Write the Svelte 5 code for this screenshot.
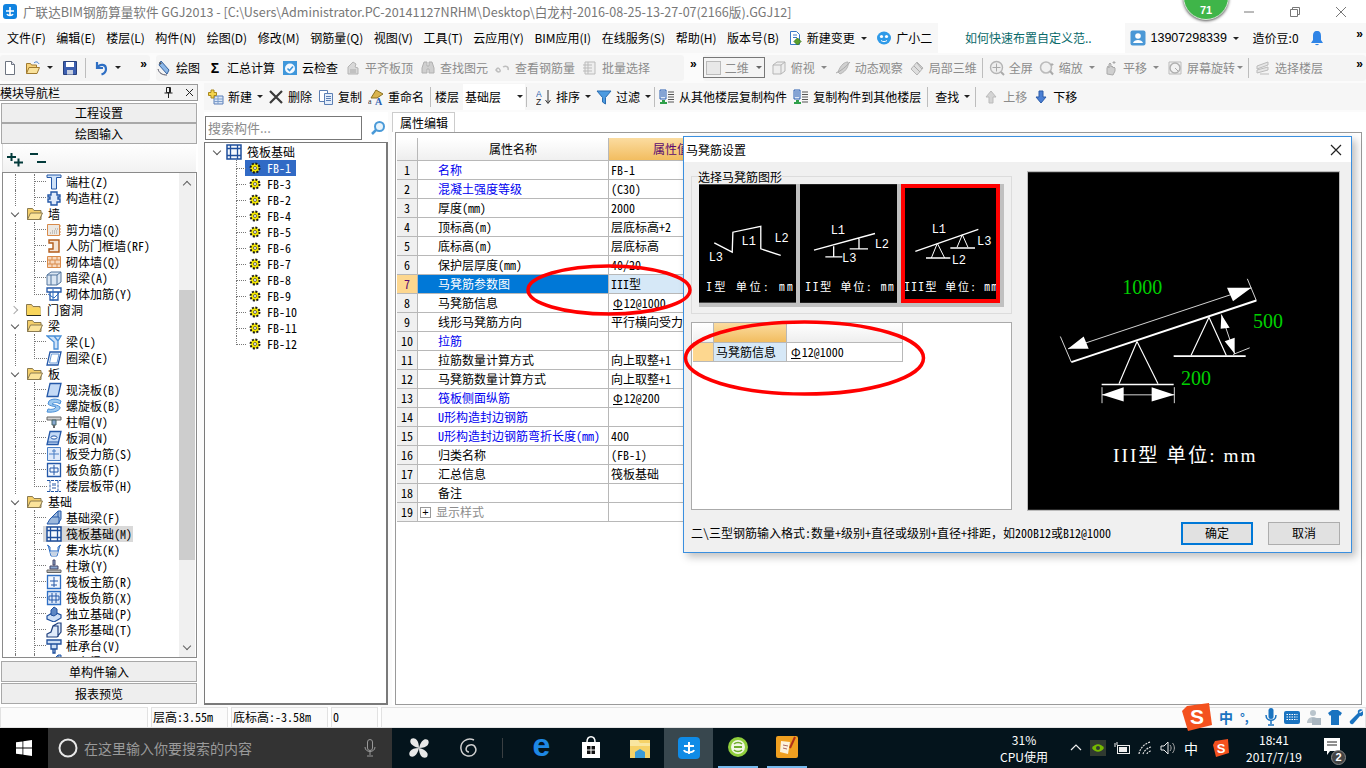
<script>
  // toolbar / tree icons, 16x16
  const icons = {
    file: '<path d="M3.5 1.5h6l3 3v10h-9z" fill="#fff" stroke="#6d7480"/><path d="M9.5 1.5v3h3" fill="#dde" stroke="#6d7480"/>',
    open: '<path d="M1.5 13.5v-10h4l1 1.5h5v2" fill="#f6d27a" stroke="#a07a30"/><path d="M1.5 13.5l2.5-6h10.5l-2.5 6z" fill="#f9e29c" stroke="#a07a30"/><path d="M9 3c2-2 4-1 5 1" fill="none" stroke="#3a78c8"/>',
    save: '<path d="M1.5 1.5h13v13h-13z" fill="#3c5fb0" stroke="#27407c"/><path d="M4 2h8v5H4z" fill="#fff"/><path d="M5 10h6v4.500H5z" fill="#c8d0e0"/>',
    undo: '<path d="M4 2v6h6M4.500 7.500C7 3.500 13 4 13 9c0 2.500-1.500 4.500-4.500 5.500" fill="none" stroke="#2f6fc4" stroke-width="2.200"/>',
    draw: '<path d="M5 1l8 9-2 4-8-9z" fill="#8db8e8" stroke="#335f9c"/><path d="M2 9c1 4 4 6 9 6" fill="none" stroke="#556" /><path d="M3 2l3 1-2 2z" fill="#555"/>',
    cloud: '<path d="M1 1h14v14H1z" fill="#3f97db"/><circle cx="8" cy="8.500" r="5" fill="#f4f9ff"/><path d="M5.500 8.500l2 2 3.500-4" fill="none" stroke="#3f97db" stroke-width="1.600"/>',
    g1: '<path d="M3 14V7l5-5 3 2-1 3 3 1v6z" fill="#d8d8d8" stroke="#b4b4b4"/><path d="M5 10h6M5 12h6" stroke="#aaa"/>',
    g2: '<path d="M2 8l2-6h3v4h2V2h3l2 6v5H9V9H7v4H2z" fill="#cfcfcf" stroke="#b0b0b0"/>',
    g3: '<path d="M1 10c2-3 3-2 4 0s-2 3-4 0zM8 7c3-2 6 0 5 3" fill="none" stroke="#bdbdbd" stroke-width="1.500"/>',
    g4: '<path d="M3 2h10v12H3z" fill="#eee" stroke="#bbb"/><path d="M1 5h9M1 8h9M1 11h9M6 2v12" stroke="#bbb"/>',
    cube: '<path d="M2 5l4-3h8v9l-4 3H2z" fill="#eee" stroke="#b5b5b5"/><path d="M2 5h8v9M10 5l4-3" fill="none" stroke="#b5b5b5"/>',
    orbit: '<path d="M3 12c3-8 7-10 10-10 1 3-1 9-8 12z" fill="#cfcfcf" stroke="#b4b4b4"/><path d="M1 13C6 11 12 6 15 2" stroke="#aaa" fill="none"/>',
    local: '<path d="M2 9l6-7 6 6-6 7z" fill="#dedede" stroke="#b4b4b4"/><path d="M5 6l6 6M8 3l5 6" stroke="#aaa"/>',
    full: '<circle cx="7.500" cy="7.500" r="6" fill="#eee" stroke="#b4b4b4" stroke-width="1.400"/><path d="M7.500 3.500v8M3.500 7.500h8" stroke="#aaa"/><path d="M12 12l3 3" stroke="#aaa" stroke-width="2"/>',
    zoom: '<circle cx="7" cy="7.500" r="5.500" fill="#f0f0f0" stroke="#bbb" stroke-width="1.600"/><path d="M11 11l3 3.500" stroke="#aaa" stroke-width="2"/><path d="M13 3v3M11.500 4.500h3" stroke="#aaa"/>',
    pan: '<path d="M4 14V8l1-2 1 2V4l1-1 1 1v3l1-1 1 1v1l1-1 1 1v3l-2 4z" fill="#cfcfcf" stroke="#aaa"/><path d="M11 1v3M9.500 2.500h3" stroke="#aaa"/>',
    rotate: '<path d="M2 2h12v12H2z" fill="#f2f2f2" stroke="#bbb"/><circle cx="8" cy="8" r="5" fill="none" stroke="#b0b0b0" stroke-width="1.500"/><path d="M8 8l3 3" stroke="#aaa"/>',
    floors: '<path d="M2 6l11-4v3L2 9zM2 10l11-3v3L2 13z" fill="#e6e6e6" stroke="#bbb"/><path d="M5 14h9" stroke="#bbb"/>',
    newc: '<path d="M6 3.500h10" stroke="none"/><path d="M6 7h9v8H6z" fill="#dbe6f6" stroke="#5a7fb8"/><path d="M6 10h9M6 12.500h9M10 7v8" stroke="#7f9fcc"/><path d="M3 1h3v2.500h2.500v3H6V9H3V6.500H.500v-3H3z" fill="#f4d44c" stroke="#a8871c"/>',
    del: '<path d="M2 2l12 12M14 2L2 14" stroke="#3a3a3a" stroke-width="2.200"/>',
    copy: '<path d="M1.500 1.500h8v11h-8z" fill="#fff" stroke="#5c7fb4"/><path d="M6.500 4.500h8v11h-8z" fill="#e4eefb" stroke="#5c7fb4"/><path d="M8 7.500h5M8 9.500h5M8 11.500h5" stroke="#5c7fb4"/>',
    rename: '<path d="M3 9l5-8 7 4-6 4z" fill="#d9b44e" stroke="#8a7020"/><text x="0" y="15" font-size="8" font-family="Liberation Serif" fill="#333">a</text><text x="7" y="15.500" font-size="10" font-weight="700" font-family="Liberation Serif" fill="#2a5fb0">A</text>',
    sort: '<text x="0" y="7.500" font-size="8.500" font-family="Liberation Sans" fill="#2a5fb0">A</text><text x="0" y="15.500" font-size="8.500" font-family="Liberation Sans" fill="#222">Z</text><path d="M12 1v13M9.500 11l2.500 3.500 2.500-3.500" fill="none" stroke="#333"/>',
    filter: '<path d="M1 2h14L9.500 8.500V15l-3-2V8.500z" fill="#4d9be0" stroke="#2a6cb0"/>',
    fromf: '<path d="M1 1h6v9H1z" fill="#dfe9f7" stroke="#2a5fb0"/><path d="M2 3h4M2 5h4M2 7h4" stroke="#2a5fb0"/><path d="M9 3h6M9 5.500h6M9 8h6M9 10.500h6M9 13h6" stroke="#555"/><path d="M3 11h3v2h2v2H1v-2h2z" fill="#2fa04a"/>',
    up: '<path d="M8 2l5 6h-3v6H6V8H3z" fill="#d4d4d4" stroke="#bbb"/>',
    down: '<path d="M8 14l5-6h-3V2H6v6H3z" fill="#4a7fd4" stroke="#2c5ca8"/>',
    changes: '<path d="M3.500 1.500h6l3 3v10h-9z" fill="#fff" stroke="#3a78c8"/><path d="M6 5h4M6 7.500h4" stroke="#3a78c8"/><path d="M10.500 8l3.500 3.500-3.500 3.500-3.500-3.500z" fill="#5aa02c" stroke="#3a7a1c"/>',
    mascot: '<ellipse cx="8" cy="8" rx="7" ry="6.500" fill="#2f9ae8"/><circle cx="5.500" cy="6.500" r="1.600" fill="#fff"/><circle cx="10.500" cy="6.500" r="1.600" fill="#fff"/><path d="M5 10.500c2 1.500 4 1.500 6 0" stroke="#fff" fill="none"/>',
    user: '<rect x="0.500" y="0.500" width="15" height="15" rx="2" fill="#4b98d6"/><circle cx="8" cy="6" r="2.800" fill="#fff"/><path d="M3 13c1-4 9-4 10 0z" fill="#fff"/>',
    bell: '<path d="M8 1c3 0 4 2 4 5v4l2 3H2l2-3V6c0-3 1-5 4-5z" fill="#2f84e6"/><path d="M6 14c.5 1.500 3.500 1.500 4 0z" fill="#2f84e6"/>',
    // tree
    duanzhu: '<path d="M1 1h14v2.500H10.500V15h-5V3.500H1z" fill="#cfe2f8" stroke="#2458a8"/>',
    gouzao: '<path d="M5 2h6v3h3v2h-2v2h2v3h-3v3H5v-3H2V9h2V7H2V5h3z" fill="#dfeafa" stroke="#2458a8" stroke-width="1.400"/>',
    jianli: '<path d="M1.500 2.500h12v11h-12z" fill="#ece8e2" stroke="#d88a4a"/><path d="M4 11h8M6 9h6M9 7h3" stroke="#999" stroke-dasharray="1 1"/><path d="M14 3v10" stroke="#d88a4a" stroke-dasharray="2 1"/>',
    renfang: '<path d="M3 2h10v12H3v-3h4V5H3z" fill="#f4e4d6" stroke="#b25c1c" stroke-width="1.400"/>',
    brick: '<path d="M1.500 2.500h13v11h-13z" fill="#f7d9bf" stroke="#d88a4a"/><path d="M1.500 6h13M1.500 10h13M6 2.500V6M11 2.500V6M4 6v4M9 6v4M6 10v3.500M11 10v3.500" stroke="#d88a4a"/>',
    anliang: '<path d="M1 5l4-3h10v10l-4 3H1z" fill="#dbe6f2" stroke="#52749c"/><path d="M1 5h10v10M11 5l4-3" fill="none" stroke="#52749c"/><path d="M5 5v10" stroke="#52749c"/>',
    qiti: '<path d="M1 2h14v4H1zM4 6v8h8V6" fill="none" stroke="#2458a8" stroke-width="1.300"/><path d="M7 3v12M2 8l6 4 5-5" fill="none" stroke="#2f6fc4"/>',
    liang: '<path d="M1 2h14l-3 5v8H8V8zM8 2l4 5" fill="#cfe2f8" stroke="#4a90d8" stroke-width="1.300"/>',
    quan: '<path d="M4 2h11l-3 13H1z" fill="#fff" stroke="#2458a8" stroke-width="1.300"/><path d="M5.500 4h7.500l-2 9H3.500z" fill="none" stroke="#6a9ad8"/>',
    xianjiao: '<path d="M4 1.500h11l-3 13H1z" fill="#c4daf6" stroke="#2458a8" stroke-width="1.300"/>',
    luoxuan: '<path d="M3 3c4-3 9-2 12 0l-1 3c-3-2-6-2-8 0 3 1 6 1 8 3 1 3-5 6-13 5l1-3c4 1 7 0 8-2-3-1-6-1-8-3z" fill="#9cc8f0" stroke="#4a90d8"/>',
    zhumao: '<path d="M1 3h14v3H1z" fill="#d0d0d0" stroke="#666"/><path d="M6 6h4v5H6z" fill="#8aa8d0" stroke="#466"/><path d="M7 11h2v3H7z" fill="#666"/>',
    bandong: '<path d="M4 1.500h11l-3 13H1z" fill="#c4daf6" stroke="#2458a8" stroke-width="1.300"/><ellipse cx="8" cy="7.500" rx="3" ry="1.600" fill="#fff" stroke="#2458a8"/><path d="M2 12h10" stroke="#2458a8"/>',
    shouli: '<path d="M1.500 1.500h13v13h-13z" fill="#dfeafa" stroke="#4a7fc4"/><path d="M8 3v10M3 8h10M6 5h4" stroke="#4a7fc4" fill="none"/>',
    fujin: '<path d="M1.500 1.500h13v13h-13z" fill="#f2f7fe" stroke="#2458a8" stroke-width="1.300"/><path d="M4 6h8v4H4zM8 3v10" stroke="#2458a8" fill="none"/>',
    bandai: '<path d="M1 2.500h14M1 13.500h14M4 2.500v11M12 2.500v11M7 5v6M9 5v6" stroke="#2458a8" fill="none" stroke-dasharray="3 1"/>',
    jichuliang: '<path d="M1 14l3-5 2-2 6-6h3v8l-3 5z" fill="#9cb8dc" stroke="#2458a8"/><path d="M6 7h7v7M12 1v6" fill="none" stroke="#2458a8"/>',
    fabran: '<path d="M1 1h14v14H1z" fill="#f4f8fe" stroke="#1f4f9c" stroke-width="1.500"/><path d="M4.500 4.500h7v7h-7zM1 4.500h3M12 4.500h3M1 11.500h3M12 11.500h3M4.500 1v3M11.500 1v3M4.500 12v3M11.500 12v3" fill="none" stroke="#1f4f9c" stroke-width="1.300"/>',
    jishui: '<path d="M1 3l3 2v4h8V5l3-2M2 3l3 11h6l3-11" fill="none" stroke="#2f6fc4"/><path d="M4 10h8l-2 4H6z" fill="#c8d4e4"/>',
    zhudun: '<path d="M7 2h2v5H7zM4 8h8v3H4z" fill="#8aa8d0" stroke="#446"/><path d="M1 12h14v2.500H1z" fill="#b8b8b8" stroke="#666"/>',
    zhujin: '<path d="M1.500 1.500h13v13h-13z" fill="#f2f7fe" stroke="#2f6fc4" stroke-width="1.300"/><path d="M8 3v10M4 7h8M5 11h6" stroke="#2458a8" fill="none"/>',
    fufu: '<path d="M1.500 1.500h13v13h-13z" fill="#dfeafa" stroke="#2f6fc4" stroke-width="1.300"/><path d="M3 6h10v4H3zM6 3v10M10 3v10" stroke="#2458a8" fill="none"/>',
    duli: '<path d="M1 10l7-4 7 3v3l-7 4-7-3z" fill="#cfe0f6" stroke="#1f4f9c" stroke-width="1.200"/><path d="M5 9V4l3-3 3 2v5l-3 2z" fill="#5d87c4" stroke="#1f4f9c"/>',
    tiaoxing: '<path d="M1 15v-3l4-2 2-6 5-3h3v9l-4 5zM7 4h5v11" fill="#dfeafa" stroke="#1f3f7c" stroke-width="1.200"/>',
    chengtai: '<path d="M1 2h14v4H1zM5 6h6v5H5zM7 11h2v4H7z" fill="#cfe0f6" stroke="#1f4f9c" stroke-width="1.300"/>'
  };

  const menus = ['文件(F)', '编辑(E)', '楼层(L)', '构件(N)', '绘图(D)', '修改(M)', '钢筋量(Q)', '视图(V)', '工具(T)', '云应用(Y)', 'BIM应用(I)', '在线服务(S)', '帮助(H)', '版本号(B)'];

  const tools1a = [
    { i: 'draw', t: '绘图' }, { g: 'Σ', t: '汇总计算' }, { i: 'cloud', t: '云检查' },
    { i: 'g1', t: '平齐板顶', off: 1 }, { i: 'g2', t: '查找图元', off: 1 }, { i: 'g3', t: '查看钢筋量', off: 1 }, { i: 'g4', t: '批量选择', off: 1 }
  ];
  const tools1b = [
    { i: 'cube', t: '俯视', off: 1, arrow: 1 }, { i: 'orbit', t: '动态观察', off: 1 }, { i: 'local', t: '局部三维', off: 1 }, { sep: 1 },
    { i: 'full', t: '全屏', off: 1 }, { i: 'zoom', t: '缩放', off: 1, arrow: 1 }, { i: 'pan', t: '平移', off: 1, arrow: 1 },
    { i: 'rotate', t: '屏幕旋转', off: 1, arrow: 1, tight: 1 }, { sep: 1 }, { i: 'floors', t: '选择楼层', off: 1 }
  ];
  const tools2a = [{ i: 'newc', t: '新建', arrow: 1 }, { i: 'del', t: '删除' }, { i: 'copy', t: '复制' }, { i: 'rename', t: '重命名' }];
  const tools2b = [
    { i: 'sort', t: '排序', arrow: 1 }, { i: 'filter', t: '过滤', arrow: 1 }, { sep: 1, slim: 1 },
    { i: 'fromf', t: '从其他楼层复制构件' }, { i: 'fromf', t: '复制构件到其他楼层' }, { sep: 1 },
    { t: '查找', arrow: 1 }, { sep: 1 }, { i: 'up', t: '上移', off: 1 }, { i: 'down', t: '下移' }
  ];

  // kind: f = open folder, c = closed folder, default leaf
  const nav = [
    { t: '端柱(Z)', i: 'duanzhu' }, { t: '构造柱(Z)', i: 'gouzao' },
    { t: '墙', f: 'open' },
    { t: '剪力墙(Q)', i: 'jianli' }, { t: '人防门框墙(RF)', i: 'renfang' }, { t: '砌体墙(Q)', i: 'brick' }, { t: '暗梁(A)', i: 'anliang' }, { t: '砌体加筋(Y)', i: 'qiti', last: 1 },
    { t: '门窗洞', f: 'closed' },
    { t: '梁', f: 'open' },
    { t: '梁(L)', i: 'liang' }, { t: '圈梁(E)', i: 'quan', last: 1 },
    { t: '板', f: 'open' },
    { t: '现浇板(B)', i: 'xianjiao' }, { t: '螺旋板(B)', i: 'luoxuan' }, { t: '柱帽(V)', i: 'zhumao' }, { t: '板洞(N)', i: 'bandong' }, { t: '板受力筋(S)', i: 'shouli' }, { t: '板负筋(F)', i: 'fujin' }, { t: '楼层板带(H)', i: 'bandai', last: 1 },
    { t: '基础', f: 'open' },
    { t: '基础梁(F)', i: 'jichuliang' }, { t: '筏板基础(M)', i: 'fabran', sel: 1 }, { t: '集水坑(K)', i: 'jishui' }, { t: '柱墩(Y)', i: 'zhudun' }, { t: '筏板主筋(R)', i: 'zhujin' }, { t: '筏板负筋(X)', i: 'fufu' }, { t: '独立基础(P)', i: 'duli' }, { t: '条形基础(T)', i: 'tiaoxing' }, { t: '桩承台(V)', i: 'chengtai' }, { t: '承台梁(F)', i: 'jichuliang' }
  ];

  const parts = ['FB-1', 'FB-3', 'FB-2', 'FB-4', 'FB-5', 'FB-6', 'FB-7', 'FB-8', 'FB-9', 'FB-10', 'FB-11', 'FB-12'];

  const props = [
    { n: '名称', v: 'FB-1', blue: 1 }, { n: '混凝土强度等级', v: '(C30)', blue: 1 }, { n: '厚度(mm)', v: '2000' },
    { n: '顶标高(m)', v: '层底标高+2' }, { n: '底标高(m)', v: '层底标高' }, { n: '保护层厚度(mm)', v: '40/20' },
    { n: '马凳筋参数图', v: 'III型', sel: 1 }, { n: '马凳筋信息', v: '12@1000', rebar: 1 }, { n: '线形马凳筋方向', v: '平行横向受力筋' },
    { n: '拉筋', v: '', blue: 1 }, { n: '拉筋数量计算方式', v: '向上取整+1' }, { n: '马凳筋数量计算方式', v: '向上取整+1' },
    { n: '筏板侧面纵筋', v: '12@200', blue: 1, rebar: 1 }, { n: 'U形构造封边钢筋', v: '', blue: 1 }, { n: 'U形构造封边钢筋弯折长度(mm)', v: '400', blue: 1 },
    { n: '归类名称', v: '(FB-1)' }, { n: '汇总信息', v: '筏板基础' }, { n: '备注', v: '' }, { n: '显示样式', v: '', plus: 1 }
  ];
</script>

{#snippet ic(name, size = 16)}
  <svg class="ic" width={size} height={size} viewBox="0 0 16 16">{@html icons[name]}</svg>
{/snippet}

{#snippet tools(list)}
  {#each list as it}
    {#if it.sep}
      <span class="sep" class:slim={it.slim}></span>
    {:else}
      <span class="tool" class:off={it.off} class:tight={it.tight}>
        {#if it.i}{@render ic(it.i)}{/if}
        {#if it.g}<b class="sigma">{it.g}</b>{/if}
        <span>{it.t}</span>
        {#if it.arrow}<i class="arrow"></i>{/if}
      </span>
    {/if}
  {/each}
{/snippet}

{#snippet folder(open)}
  <svg class="ic" width="16" height="14" viewBox="0 0 16 14">
    <path d="M.5 12.500V1.500h5l1.500 2h7v9z" fill="#f5cf6a" stroke="#8a7a50"/>
    {#if open}<path d="M.5 12.500l3-6.500h12l-3 6.500z" fill="#fbe39a" stroke="#8a7a50"/>{:else}<path d="M1 5h13.500v7.500H1z" fill="#f9d65c"/><path d="M1 12.500h14" stroke="#2a2a1a"/>{/if}
  </svg>
{/snippet}

<div class="screen">
  <header class="titlebar">
    <svg class="logo" width="14" height="15" viewBox="0 0 14 15"><rect width="14" height="15" rx="3" fill="#1183e0"/><path d="M7 3v9M3 7h8M4 10c1 2 5 2 6 0" stroke="#fff" stroke-width="1.600" fill="none"/></svg>
    <span class="title-text">广联达BIM钢筋算量软件 GGJ2013 - [C:\Users\Administrator.PC-20141127NRHM\Desktop\白龙村-2016-08-25-13-27-07(2166版).GGJ12]</span>
    <span class="winbtns">
      <svg width="12" height="12" viewBox="0 0 12 12"><path d="M1 6h10" stroke="#777"/></svg>
      <svg width="12" height="12" viewBox="0 0 12 12"><path d="M1.500 3.500h7v7h-7zM3.500 3V1.500h7v7H9" fill="none" stroke="#777"/></svg>
      <svg width="12" height="12" viewBox="0 0 12 12"><path d="M1 1l10 10M11 1L1 11" stroke="#777"/></svg>
    </span>
  </header>

  <nav class="menubar">
    {#each menus as m}<span class="menu">{m}</span>{/each}
    <span class="tool menu-tool">{@render ic('changes')}<span>新建变更</span><i class="arrow"></i></span>
    <span class="tool menu-tool">{@render ic('mascot')}<span>广小二</span></span>
    <span class="tip">如何快速布置自定义范..</span>
    <span class="tool">{@render ic('user')}<span class="phone">13907298339</span><i class="arrow"></i></span>
    <span class="beans">造价豆:0</span>
    {@render ic('bell', 16)}
    <span class="more end">»</span>
  </nav>

  <div class="toolbar one">
    <div class="strip left">
      {@render ic('file')}
      <span class="tool">{@render ic('open')}<i class="arrow"></i></span>
      {@render ic('save')}
      <span class="sep"></span>
      <span class="tool">{@render ic('undo')}<i class="arrow"></i></span>
      <span class="more">»</span>
    </div>
    <div class="strip mid">{@render tools(tools1a)}</div>
    <span class="more">»</span>
    <div class="strip right">
      <span class="combo2d"><i class="sq"></i><span>二维</span><i class="arrow"></i></span>
      {@render tools(tools1b)}
      <span class="more end">»</span>
    </div>
  </div>

  <div class="work">
    <aside class="nav">
      <div class="nav-head">
        <span>模块导航栏</span>
        <svg class="pin" width="9" height="11" viewBox="0 0 9 11"><path d="M2.500 .5h4v5h-4zM.5 6h8M4.500 6v5M5.500 1v4.500" fill="none" stroke="#222"/></svg>
        <svg class="cross" width="9" height="9" viewBox="0 0 9 9"><path d="M1 1l7 7M8 1L1 8" stroke="#222"/></svg>
      </div>
      <button class="navbtn first">工程设置</button>
      <button class="navbtn second">绘图输入</button>
      <div class="plusminus">
        <svg width="42" height="20" viewBox="0 0 42 20"><path d="M0 8h9M4.500 4v8M7 13.500h9M11.500 9.500v8" stroke="#023a3a" stroke-width="2" fill="none"/><path d="M23 5h8M30 13h9" stroke="#023a3a" stroke-width="2"/></svg>
      </div>
      <div class="navtree">
        <div class="navlist">
          {#each nav as row}
            {#if row.f}
              <div class="nrow fold">
                <span class="chev" class:closed={row.f === 'closed'}></span>
                {@render folder(row.f === 'open')}
                <span class="ntext cad">{row.t}</span>
              </div>
            {:else}
              <div class="nrow leaf" class:last={row.last}>
                <span class="nicon" class:picked={row.sel}>{@render ic(row.i)}<span class="ntext cad">{row.t}</span></span>
              </div>
            {/if}
          {/each}
        </div>
        <div class="scroll">
          <span class="sarrow up"></span>
          <span class="thumb"></span>
          <span class="sarrow down"></span>
        </div>
      </div>
      <button class="navbtn low">单构件输入</button>
      <button class="navbtn">报表预览</button>
    </aside>

    <div class="content">
      <div class="toolbar two">
        {@render tools(tools2a)}
        <span class="sep"></span>
        <span class="plain">楼层</span>
        <span class="floorbox"><span>基础层</span><i class="arrow"></i></span>
        <span class="sep after-floor"></span>
        {@render tools(tools2b)}
      </div>

      <div class="panes">
        <section class="parts">
          <div class="searchrow">
            <span class="search">搜索构件...</span>
            <svg width="16" height="16" viewBox="0 0 16 16"><circle cx="9.500" cy="6.500" r="4.500" fill="#e8f4fc" stroke="#4a9ad8" stroke-width="2"/><path d="M6 10l-4 4" stroke="#4a9ad8" stroke-width="2.500"/></svg>
          </div>
          <div class="parttree">
            <div class="proot"><span class="chev"></span><span class="bigic">{@render ic('fabran')}</span><span class="ntext">筏板基础</span></div>
            {#each parts as p, i}
              <div class="pchild" class:last={i === parts.length - 1}>
                <span class="pcell" class:current={i === 0}>
                  <svg class="gear" width="12" height="12" viewBox="0 0 12 12"><circle cx="6" cy="6" r="4.500" fill="#f4e800" stroke="#1a1a1a" stroke-width="2" stroke-dasharray="2 1.500"/><circle cx="6" cy="6" r="1.500" fill="#fff" stroke="#333" stroke-width=".7"/></svg>
                  <span class="cad">{p}</span>
                </span>
              </div>
            {/each}
          </div>
        </section>

        <section class="editor">
          <div class="tabs"><span class="tab">属性编辑</span></div>
          <div class="sheet">
            <div class="grow head"><span class="gno"></span><span class="gname">属性名称</span><span class="gval">属性值</span></div>
            {#each props as p, i}
              <div class="grow" class:sel={p.sel}>
                <span class="gno cad">{i + 1}</span>
                <span class="gname cad" class:blue={p.blue} class:mute={p.plus}>
                  {#if p.plus}<span class="plusbox">+</span>{/if}{p.n}
                </span>
                <span class="gval cad">{#if p.rebar}<span class="rebar">Φ</span>{/if}{p.v}</span>
              </div>
            {/each}
          </div>
        </section>
      </div>
    </div>
  </div>

  <footer class="status">
    <span class="cell a"></span>
    <span class="cell b cad">层高:3.55m</span>
    <span class="cell c cad">底标高:-3.58m</span>
    <span class="cell d cad">0</span>
    <span class="cell e"></span>
    <div class="ime">
      <svg width="30" height="28" viewBox="0 0 30 28"><path d="M5 3l22-3 3 22-24 6-6-20z" fill="#f4511e"/><text x="15" y="21" font-size="21" font-weight="700" text-anchor="middle" font-family="Liberation Sans" fill="#fff">S</text></svg>
      <span class="zh">中</span>
      <span class="punct">°,</span>
      <svg width="12" height="18" viewBox="0 0 12 18"><rect x="3.500" y="0" width="5" height="11" rx="2.500" fill="#1a73c0"/><path d="M1 7c0 7 10 7 10 0M6 12v4M3 17h6" fill="none" stroke="#1a73c0" stroke-width="1.500"/></svg>
      <svg width="16" height="13" viewBox="0 0 16 13"><rect width="16" height="13" rx="2" fill="#1a73c0"/><path d="M2.500 3.500h11M2.500 6h11M2.500 8.500h11" stroke="#fff" stroke-dasharray="1.500 1"/></svg>
      <svg width="14" height="16" viewBox="0 0 14 16"><circle cx="6" cy="4" r="3" fill="#b9c4cc"/><path d="M0 14c0-8 12-8 12 0z" fill="#b9c4cc"/><rect x="5" y="9" width="9" height="7" fill="#a9b6c0"/></svg>
      <svg width="14" height="15" viewBox="0 0 14 15"><path d="M4 0h6l4 3-2 3-1-1v10H3V5L2 6 0 3z" fill="#1a73c0"/></svg>
      <svg width="14" height="16" viewBox="0 0 14 16"><path d="M14 1c-3-2-6 0-5 3L1 12c-1 2 1 4 3 3l7-8c3 1 4-3 3-5l-3 2-1-1z" fill="#1a73c0"/></svg>
    </div>
  </footer>

  <div class="taskbar">
    <span class="start"><svg width="16" height="16" viewBox="0 0 16 16"><path d="M0 2.300l6.500-.9v6.200H0zM7.300 1.300L16 0v7.600H7.300zM0 8.400h6.500v6.200L0 13.700zM7.300 8.400H16V16l-8.700-1.200z" fill="#fff"/></svg></span>
    <span class="tsearch">
      <svg width="22" height="22" viewBox="0 0 22 22"><circle cx="11" cy="11" r="8.500" fill="none" stroke="#e8e8e8" stroke-width="2"/></svg>
      <span class="hint">在这里输入你要搜索的内容</span>
      <svg class="tmic" width="12" height="18" viewBox="0 0 12 18"><rect x="3.500" y=".5" width="5" height="11" rx="2.500" fill="none" stroke="#999"/><path d="M1 8c0 6 10 6 10 0M6 13v3M3 17h6" fill="none" stroke="#999"/></svg>
    </span>
    <span class="task pad"><svg width="24" height="24" viewBox="0 0 24 24"><path d="M12 12C4 10 2 6 4 3c3-2 8 0 8 9zM12 12c2-8 6-10 9-8 2 3 0 8-9 8zM12 12c8 2 10 6 8 9-3 2-8 0-8-9zM12 12c-2 8-6 10-9 8-2-3 0-8 9-8z" fill="#e8e8e8"/></svg></span>
    <span class="task"><svg width="22" height="22" viewBox="0 0 22 22"><path d="M17 3C10 0 3 5 4 12s9 9 13 5 1-10-4-9-5 7-1 7" fill="none" stroke="#d0d0d0" stroke-width="1.500"/></svg></span>
    <span class="tsep"></span>
    <span class="task"><span class="edge">e</span></span>
    <span class="task"><svg width="20" height="24" viewBox="0 0 20 24"><path d="M1 6h18v16H1z" fill="#fff"/><path d="M6 6c0-7 8-7 8 0" fill="none" stroke="#fff" stroke-width="1.500"/><path d="M6 10h3.500v3.500H6zM10.500 10H14v3.500h-3.500zM6 14.500h3.500V18H6zM10.500 14.500H14V18h-3.500z" fill="#111"/></svg></span>
    <span class="task"><svg width="22" height="22" viewBox="0 0 22 22"><path d="M1 3h20v18H1z" fill="#f6d268"/><path d="M1 3h8l2 3h10v3H1z" fill="#f9e6a0"/><path d="M6 21v-6l5-3 5 3v6z" fill="#3a9ad8"/></svg></span>
    <span class="task active"><svg width="24" height="24" viewBox="0 0 24 24"><rect x="1" y="1" width="22" height="22" rx="4" fill="#0f8be6"/><path d="M12 6v12M7 10h10M7 14c1 3 9 3 10 0" fill="none" stroke="#fff" stroke-width="2"/></svg></span>
    <span class="task lit"><svg width="24" height="24" viewBox="0 0 24 24"><circle cx="12" cy="12" r="10" fill="#8fce3c"/><circle cx="12" cy="12" r="7" fill="#f2f8e4"/><path d="M8 12h8" stroke="#6fae2c" stroke-width="2"/><path d="M8 9c2-2 6-2 8 0M8 15c2 2 6 2 8 0" fill="none" stroke="#6fae2c" stroke-width="1.500"/></svg></span>
    <span class="task lit"><svg width="24" height="24" viewBox="0 0 24 24"><rect x="1" y="1" width="22" height="22" rx="2" fill="#f0a020"/><path d="M6 6l9 1-2 12-8-2z" fill="#fdf3dc"/><path d="M8 10l5 1M8 13l4 1" stroke="#a66"/><path d="M20 2l-5 11" stroke="#b03018" stroke-width="2"/></svg></span>

    <div class="tray">
      <span class="cpu"><span>31%</span><span>CPU使用</span></span>
      <svg width="12" height="12" viewBox="0 0 12 12"><path d="M1 8l5-5 5 5" fill="none" stroke="#eee" stroke-width="1.200"/></svg>
      <svg width="16" height="16" viewBox="0 0 16 16"><rect width="16" height="16" fill="#303a30"/><path d="M2 8c3-5 9-5 12 0-3 5-9 5-12 0z" fill="#76b900"/><circle cx="8" cy="8" r="2" fill="#303a30"/></svg>
      <svg width="16" height="14" viewBox="0 0 16 14"><rect x="3.500" y="4.500" width="12" height="8" fill="none" stroke="#eee"/><rect x="5" y="6" width="8" height="5" fill="#eee"/><path d="M1 2v4M3 1v3" stroke="#eee"/></svg>
      <svg width="14" height="14" viewBox="0 0 14 14"><path d="M1 13C2 7 7 2 13 1M5 13c1-3 4-6 8-7M9 13c0-1 2-3 4-3" fill="none" stroke="#ddd" stroke-width="1.200" stroke-dasharray="2 1"/></svg>
      <svg width="16" height="14" viewBox="0 0 16 14"><path d="M1 5h3l4-4v12L4 9H1z" fill="none" stroke="#eee"/><path d="M10 4c1.500 2 1.500 4 0 6M12.500 2c2.500 3 2.500 7 0 10" fill="none" stroke="#aaa"/></svg>
      <span class="trayzh">中</span>
      <svg width="16" height="18" viewBox="0 0 16 18"><path d="M2 2l13-2 1 14-13 4-3-12z" fill="#f4511e"/><text x="8" y="14" font-size="13" font-weight="700" text-anchor="middle" font-family="Liberation Sans" fill="#fff">S</text></svg>
      <span class="clock"><span>18:41</span><span>2017/7/19</span></span>
      <span class="notify">
        <svg width="16" height="17" viewBox="0 0 16 17"><path d="M0 0h16v13H6l-3 4v-4H0z" fill="#fff"/><path d="M3 4h10M3 7h10" stroke="#222"/></svg>
        <b>2</b>
      </span>
    </div>
  </div>

  <!-- floating score badge -->
  <div class="badge"><span>71</span></div>

  <!-- dialog window -->
  <div class="dialog">
    <div class="dlg-title"><span>马凳筋设置</span>
      <svg width="12" height="12" viewBox="0 0 12 12"><path d="M1 1l10 10M11 1L1 11" stroke="#222" stroke-width="1.200"/></svg>
    </div>
    <div class="dlg-body">
      <div class="dlg-left">
        <fieldset class="group">
          <legend>选择马凳筋图形</legend>
          <div class="thumbs">
            <svg class="thumb1" width="97" height="119" viewBox="48 162 292 356">
              <rect x="48" y="162" width="292" height="356" fill="#000"/>
              <path d="M94 338l54 28 2-60 84-18v68l60 20" fill="none" stroke="#fff" stroke-width="4"/>
              <g class="lb"><text x="176" y="345">L1</text><text x="275" y="335">L2</text><text x="77" y="392">L3</text></g>
              <text class="cap" x="70" y="482" textLength="260" lengthAdjust="spacing">I型 单位: mm</text>
            </svg>
            <svg class="thumb1" width="97" height="119" viewBox="351 162 291 356">
              <rect x="351" y="162" width="291" height="356" fill="#000"/>
              <path d="M393 360l183-50M452 348v32M427 380h51M528 326v30M500 356h55" fill="none" stroke="#fff" stroke-width="4"/>
              <g class="lb"><text x="443" y="312">L1</text><text x="575" y="355">L2</text><text x="477" y="395">L3</text></g>
              <text class="cap" x="367" y="482" textLength="265" lengthAdjust="spacing">II型 单位: mm</text>
            </svg>
            <svg class="thumb1" width="99" height="119" viewBox="654 162 297 357">
              <rect x="654" y="162" width="297" height="357" fill="#000"/>
              <path d="M697 364l189-66M729 384h73M802 354h74" fill="none" stroke="#fff" stroke-width="4"/>
              <path d="M763 340l-18 44M763 340l22 44M838 314l-16 38M838 314l17 38" fill="none" stroke="#fff" stroke-width="3"/>
              <g class="lb"><text x="746" y="308">L1</text><text x="806" y="402">L2</text><text x="882" y="345">L3</text></g>
              <text class="cap" x="664" y="482" textLength="278" lengthAdjust="spacing">III型 单位: mm</text>
              <rect x="660" y="168" width="285" height="345" fill="none" stroke="#f00" stroke-width="12"/>
            </svg>
          </div>
        </fieldset>
        <div class="rebar-box">
          <div class="mini head"><span class="m0"></span><span class="m1"></span><span class="m2"></span></div>
          <div class="mini"><span class="m0"></span><span class="m1">马凳筋信息</span><span class="m2 cad"><span class="rebar">Φ</span>12@1000</span></div>
        </div>
      </div>
      <div class="preview">
        <svg width="311" height="338" viewBox="25 20 933 1013">
          <rect x="25" y="20" width="933" height="1013" fill="#000"/>
          <path d="M155 590L710 405" stroke="#fff" stroke-width="6" fill="none"/>
          <path d="M122 513l33 77M683 340l27 65M145 550L695 367M247 665v48M464 665v48M247 688h217M605 447l40 118M640 567l50-20" stroke="#fff" stroke-width="2.500" fill="none"/>
          <path d="M246 657h216M462 572h216" stroke="#fff" stroke-width="5" fill="none"/>
          <path d="M352 528l-54 127M352 528l63 127M568 455l-54 115M568 455l52 115" stroke="#fff" stroke-width="3.500" fill="none"/>
          <path d="M145 550l47-37 15 37zM695 367h-73l18 40zM605 447l25 40-27 3zM645 565l-30-38 30-10zM247 688l65-23v43zM464 688l-68-23v43z" fill="#fff"/>
          <g class="dim"><text x="308" y="386">1000</text><text x="700" y="488">500</text><text x="484" y="658">200</text></g>
          <text class="pcap" x="280" y="888" textLength="428" lengthAdjust="spacing">III型  单位: mm</text>
        </svg>
      </div>
    </div>
    <div class="dlg-foot">
      <span class="fmt cad">二\三型钢筋输入格式:数量+级别+直径或级别+直径+排距，如200B12或B12@1000</span>
      <button class="btn primary">确定</button>
      <button class="btn">取消</button>
    </div>
  </div>

  <!-- hand-drawn red marks over the screenshot -->
  <svg class="marks" width="1366" height="768" viewBox="0 0 1366 768">
    <ellipse cx="609" cy="290" rx="81" ry="24" fill="none" stroke="#f00" stroke-width="3.500"/>
    <ellipse cx="804.500" cy="358" rx="119" ry="36" fill="none" stroke="#f00" stroke-width="3.500"/>
  </svg>
</div>

<style>
  :global(body) {
    margin: 0;
    background: #f0f0f0;
  }

  .screen {
    position: relative;
    width: 1366px;
    height: 768px;
    overflow: hidden;
    display: flex;
    flex-direction: column;
    background: #fbfbfb;
    color: #000;
    font: 12px/16px "Noto Sans CJK SC", "Liberation Sans", sans-serif;
  }

  .cad {
    font-family: "Noto Sans Mono CJK SC", "Noto Sans CJK SC", monospace;
  }

  .ic {
    flex: none;
    display: block;
  }

  /* title + menu */
  .titlebar {
    height: 23px;
    flex: none;
    background: #fff;
    display: flex;
    align-items: center;
    padding-left: 3px;
    color: #777;
  }

  .title-text {
    margin-left: 6px;
    white-space: nowrap;
    font-size: 12.6px;
  }

  .winbtns {
    margin-left: auto;
    display: flex;
    gap: 34px;
    padding-right: 19px;
  }

  .menubar {
    height: 30px;
    flex: none;
    display: flex;
    align-items: center;
    padding-left: 7px;
    gap: 10.6px;
    background: #f7f7f7;
    white-space: nowrap;
  }

  .menu-tool {
    margin-left: -3px;
  }

  .tip {
    width: 187px;
    height: 30px;
    box-sizing: border-box;
    margin: 0 -5px;
    padding: 7px 0 0 27px;
    background: #fff;
    color: #0a6a6a;
  }

  .phone {
    font-family: "Liberation Sans", sans-serif;
    font-size: 12.5px;
  }

  .beans {
    margin-left: 1px;
  }

  .more {
    font: 700 12px/12px "Liberation Sans", sans-serif;
    margin-top: -8px;
  }

  .more.end {
    margin-left: auto;
    margin-right: 3px;
  }

  /* toolbars */
  .toolbar {
    display: flex;
    align-items: center;
    white-space: nowrap;
  }

  .toolbar.one {
    height: 29px;
    flex: none;
    gap: 6px;
    background: #fbfbfb;
  }

  .strip {
    height: 26px;
    display: flex;
    align-items: center;
    gap: 6px;
    background: #f4f4f4;
    border-radius: 3px;
  }

  .strip.left {
    padding: 0 3px 0 2px;
    width: 150px;
    box-sizing: border-box;
    gap: 7px;
  }

  .strip.left .more {
    margin-left: auto;
  }

  .strip.mid {
    gap: 7px;
    padding-right: 34px;
  }

  .strip.right {
    flex: 1;
  }

  .strip.right .sep {
    margin: 0 -0.5px;
  }

  .tool {
    display: inline-flex;
    align-items: center;
    gap: 4px;
  }

  .tool.off {
    color: #8c8c8c;
  }

  .tool.tight .arrow {
    margin: 0 0 0 -2px;
  }

  .sigma {
    width: 16px;
    text-align: center;
    font: 700 14px/16px "Liberation Sans", sans-serif;
  }

  .arrow {
    display: inline-block;
    width: 0;
    height: 0;
    border: 3px solid transparent;
    border-top: 3px solid #222;
    border-bottom: 0;
    margin: 0 2px;
  }

  .off .arrow {
    border-top-color: #888;
  }

  .sep {
    width: 1px;
    height: 20px;
    background: #bdbdbd;
    flex: none;
  }

  .combo2d {
    width: 62px;
    height: 21px;
    box-sizing: border-box;
    border: 1px solid #777;
    display: flex;
    align-items: center;
    gap: 4px;
    padding-left: 2px;
    color: #8c8c8c;
  }

  .sq {
    width: 13px;
    height: 12px;
    background: #e8e8e8;
    border: 1px solid #bbb;
  }

  .combo2d .arrow {
    margin-left: 3px;
    border-top-color: #666;
  }

  /* workspace */
  .work {
    flex: 1;
    min-height: 0;
    display: flex;
  }

  .nav {
    width: 198px;
    flex: none;
    margin-top: 2px;
    display: flex;
    flex-direction: column;
    background: #fff;
  }

  .nav-head {
    height: 15px;
    border: 1px solid #999;
    border-width: 1px 1px 1px 0;
    display: flex;
    align-items: center;
    background: #f2f2f2;
    line-height: 13px;
  }

  .pin {
    margin-left: auto;
    margin-right: 12px;
  }

  .cross {
    margin-right: 3px;
  }

  .navbtn {
    height: 21px;
    flex: none;
    box-sizing: border-box;
    margin: 0 1px 1px;
    padding: 0;
    border: 1px solid #a8a8a8;
    background: #eee;
    color: #000;
    font: inherit;
  }

  .navbtn.first {
    margin: 2px 1px 0;
    height: 20px;
  }

  .navbtn.second {
    margin-bottom: 0;
  }

  .navbtn.low {
    margin-top: 3px;
  }

  .plusminus {
    height: 28px;
    flex: none;
    box-sizing: border-box;
    padding: 5px 0 0 4px;
    margin: 0 2px;
    background: linear-gradient(#fff, #f2f2f2);
    border-left: 1px solid #ddd;
  }

  .navtree {
    height: 486px;
    flex: none;
    box-sizing: border-box;
    margin: 0 1px 0 2px;
    border: 1px solid #8a8a8a;
    display: flex;
    overflow: hidden;
    background: #fff;
  }

  .navlist {
    width: 176px;
    flex: none;
    padding-top: 1px;
  }

  .nrow {
    position: relative;
    height: 16px;
    display: flex;
    align-items: center;
    white-space: nowrap;
  }

  .nrow::before {
    content: '';
    position: absolute;
    left: 12px;
    top: 0;
    bottom: 0;
    border-left: 1px dotted #777;
  }

  .fold::before {
    display: none;
  }

  .leaf::after {
    content: '';
    position: absolute;
    left: 31px;
    top: 0;
    width: 12px;
    height: 8px;
    border-left: 1px dotted #777;
    border-bottom: 1px dotted #777;
  }

  .leaf:not(.last)::after {
    height: 16px;
    border-bottom: 0;
    background: repeating-linear-gradient(90deg, #777 0 1px, transparent 1px 2px) 0 7px / 12px 1px no-repeat;
  }

  .nicon {
    margin-left: 40px;
    padding-left: 3px;
    display: inline-flex;
    align-items: center;
    gap: 4px;
    height: 16px;
    padding-right: 1px;
    position: relative;
    z-index: 1;
  }

  .nicon.picked {
    background: #d9d9d9;
  }

  .chev {
    width: 6px;
    height: 6px;
    margin: -3px 0 0 9px;
    box-sizing: border-box;
    border: solid #555;
    border-width: 0 1.500px 1.500px 0;
    transform: rotate(45deg);
    flex: none;
  }

  .chev.closed {
    border-color: #aaa;
    margin: 0 0 0 8px;
    transform: rotate(-45deg);
  }

  .fold .ic {
    margin-left: 9px;
  }

  .fold .ntext {
    margin-left: 5px;
  }

  .ntext {
    white-space: nowrap;
  }

  .scroll {
    width: 16px;
    flex: none;
    background: #f0f0f0;
    position: relative;
    display: flex;
    flex-direction: column;
    align-items: center;
  }

  .thumb {
    position: absolute;
    left: 0;
    right: 0;
    top: 117px;
    height: 270px;
    background: #cdcdcd;
  }

  .sarrow {
    position: absolute;
    width: 6px;
    height: 6px;
    box-sizing: border-box;
    border: solid #606060;
    border-width: 1.500px 0 0 1.500px;
    transform: rotate(45deg);
  }

  .sarrow.up {
    top: 9px;
  }

  .sarrow.down {
    bottom: 8px;
    transform: rotate(225deg);
  }

  .content {
    flex: 1;
    min-width: 0;
    display: flex;
    flex-direction: column;
  }

  .toolbar.two {
    height: 27px;
    flex: none;
    margin: 1px 0 0 6px;
    padding-left: 4px;
    gap: 6px;
    background: #f6f6f6;
  }

  .toolbar.two .arrow {
    margin: 0 -1px 0 1px;
  }

  .toolbar.two .sep {
    margin-right: 1px;
  }

  .toolbar.two .sep.slim {
    margin: 0 -2px;
  }

  .toolbar.two .sep.after-floor {
    margin: 0 3px 0 1px;
  }

  .plain {
    margin-left: -3px;
  }

  .floorbox {
    width: 62px;
    height: 26px;
    box-sizing: border-box;
    background: #fff;
    display: flex;
    align-items: center;
    justify-content: space-between;
    padding: 0 3px 0 2px;
    margin-left: -2px;
    margin-right: -6px;
  }

  .panes {
    flex: 1;
    min-height: 0;
    display: flex;
    margin-top: 2px;
    padding-bottom: 2px;
  }

  .parts {
    width: 184px;
    flex: none;
    margin-left: 6px;
    display: flex;
    flex-direction: column;
  }

  .searchrow {
    height: 30px;
    flex: none;
    display: flex;
    align-items: flex-end;
    gap: 4px;
    padding-bottom: 2px;
    box-sizing: border-box;
    background: #fff;
  }

  .search {
    width: 157px;
    height: 24px;
    box-sizing: border-box;
    margin-left: 1px;
    border: 1px solid #777;
    color: #8c8c8c;
    padding: 3px 0 0 2px;
    font-size: 13px;
  }

  .searchrow svg {
    margin: 0 0 4px 4px;
  }

  .parttree {
    flex: 1;
    box-sizing: border-box;
    border: 1px solid #7a7a7a;
    border-width: 1px 2px 2px 1px;
    padding-top: 1px;
    background: #fff;
  }

  .proot,
  .pchild {
    height: 16px;
    display: flex;
    align-items: center;
    position: relative;
  }

  .bigic {
    margin-left: 6px;
  }

  .proot .ntext {
    margin-left: 5px;
  }

  .pchild::before {
    content: '';
    position: absolute;
    left: 31px;
    top: 0;
    width: 9px;
    height: 8px;
    border-left: 1px dotted #777;
    border-bottom: 1px dotted #777;
  }

  .pchild:not(.last)::after {
    content: '';
    position: absolute;
    left: 31px;
    top: 8px;
    height: 8px;
    border-left: 1px dotted #777;
  }

  .pcell {
    margin-left: 40px;
    padding: 0 3px 0 4px;
    height: 16px;
    display: inline-flex;
    align-items: center;
    gap: 6px;
    width: 44px;
    white-space: nowrap;
  }

  .gear {
    flex: none;
  }

  .pcell.current {
    background: #316ac5;
    color: #fff;
  }

  .editor {
    flex: 1;
    min-width: 0;
    margin-left: 4px;
    display: flex;
    flex-direction: column;
    background: #fff;
  }

  .tabs {
    height: 20px;
    flex: none;
    background: #fff;
  }

  .tab {
    display: inline-block;
    height: 20px;
    box-sizing: border-box;
    padding: 2px 6px 0 7px;
    border: 1px solid #ccc;
    border-bottom: 0;
    background: #fff;
    font-size: 12px;
  }

  .sheet {
    flex: 1;
    margin: 0 4px 0 3px;
    border: 1px solid #9a9a9a;
    padding: 5px 0 0 1px;
    background: #fff;
  }

  .grow {
    height: 19px;
    width: 950px;
    display: grid;
    grid-template-columns: 21px 191px 1fr;
    box-sizing: border-box;
    border-bottom: 1px solid #b8b8b8;
    line-height: 17px;
  }

  .grow.head {
    height: 23px;
    line-height: 21px;
  }

  .grow span {
    white-space: nowrap;
    overflow: hidden;
  }

  .gno {
    background: #f0f0f0;
    border-right: 1px solid #b8b8b8;
    text-align: center;
  }

  .gname {
    padding-left: 20px;
    border-right: 1px solid #b8b8b8;
  }

  .gval {
    padding-left: 2px;
  }

  .head .gname {
    padding: 0;
    text-align: center;
    background: linear-gradient(#fff, #f0f0f0);
  }

  .head .gval {
    padding: 0 0 0 44px;
    color: #5a0a70;
    background: linear-gradient(#fbdca0, #f2bd60);
  }

  .head .gno {
    background: linear-gradient(#fff, #ededed);
  }

  .blue {
    color: #0000f0;
  }

  .mute {
    color: #8c8c8c;
    padding-left: 2px;
  }

  .grow .plusbox {
    display: inline-block;
    width: 11px;
    height: 11px;
    box-sizing: border-box;
    margin-right: 5px;
    border: 1px solid #999;
    color: #000;
    font: 11px/9px "Liberation Sans", sans-serif;
    text-align: center;
    vertical-align: -1px;
  }

  .sel .gno {
    background: #fdd78f;
    color: #5a0a70;
  }

  .sel .gname {
    background: #0078d7;
    color: #fff;
  }

  .sel .gval {
    background: #d6e8f7;
  }

  .rebar {
    text-decoration: underline;
    margin: 0 1px 0 2px;
  }

  /* status */
  .status {
    height: 21px;
    flex: none;
    display: flex;
    gap: 3px;
    box-sizing: border-box;
    background: #fff;
    border-bottom: 1px solid #e4e4e4;
    position: relative;
    line-height: 18px;
  }

  .cell {
    box-sizing: border-box;
    background: #fbfbfb;
    border: 1px solid #e2e2e2;
    border-width: 1px 1px 0 1px;
    padding-left: 1px;
    white-space: nowrap;
  }

  .a { width: 148px; }
  .b { width: 77px; }
  .c { width: 97px; }
  .d { width: 47px; }
  .e { flex: 1; }

  .ime {
    position: absolute;
    right: 3px;
    top: -4px;
    display: flex;
    align-items: center;
    gap: 7px;
  }

  .zh {
    color: #1a73c0;
    font-weight: 700;
    font-size: 14px;
  }

  .punct {
    color: #1a73c0;
    font-weight: 700;
    width: 18px;
  }

  /* taskbar */
  .taskbar {
    height: 40px;
    flex: none;
    background: #04141c;
    display: flex;
    align-items: center;
    color: #fff;
  }

  .start {
    width: 48px;
    height: 40px;
    background: #000;
    display: grid;
    place-items: center;
  }

  .tsearch {
    width: 344px;
    height: 40px;
    background: #333;
    display: flex;
    align-items: center;
    gap: 5px;
    padding-left: 9px;
    box-sizing: border-box;
    font-size: 14px;
  }

  .hint {
    color: #9a9a9a;
  }

  .tmic {
    margin-left: auto;
    margin-right: 16px;
  }

  .task {
    width: 49px;
    height: 40px;
    box-sizing: border-box;
    display: grid;
    place-items: center;
    flex: none;
  }

  .task.pad {
    margin-left: 2px;
  }

  .tsep {
    width: 1px;
    height: 20px;
    margin: 0 14px 0 10px;
    background: #3a3f42;
    flex: none;
  }

  .task.active {
    background: #38474e;
  }

  .task.lit {
    border-bottom: 2px solid #76b9ed;
    width: 40px;
    margin: 0 4.500px;
  }

  .edge {
    color: #1e88e5;
    font: 700 32px/32px "Liberation Sans", sans-serif;
    margin-top: -6px;
  }

  .tray {
    margin-left: auto;
    display: flex;
    align-items: center;
    gap: 8px;
    padding-right: 26px;
  }

  .cpu,
  .clock {
    display: flex;
    flex-direction: column;
    align-items: center;
    line-height: 17px;
  }

  .cpu {
    margin-right: 14px;
  }

  .trayzh {
    font-size: 14px;
    margin-right: 7px;
  }

  .clock {
    margin: 0 14px 0 9px;
  }

  .notify {
    position: relative;
    display: block;
  }

  .notify b {
    position: absolute;
    right: -6px;
    bottom: -7px;
    width: 15px;
    height: 15px;
    border-radius: 50%;
    background: #444;
    border: 1px solid #888;
    box-sizing: border-box;
    font: 700 11px/13px "Liberation Sans", sans-serif;
    text-align: center;
  }

  .badge {
    position: absolute;
    left: 1183px;
    top: -26px;
    width: 44px;
    height: 44px;
    border-radius: 50%;
    background: #3fb549;
    border: 1px solid #d8e8d8;
    box-shadow: 0 1px 3px #555;
    display: flex;
    align-items: flex-end;
    justify-content: center;
    color: #fff;
    font: 700 11px/18px "Liberation Sans", sans-serif;
  }

  /* dialog */
  .dialog {
    position: absolute;
    left: 683px;
    top: 136px;
    width: 669px;
    height: 417px;
    box-sizing: border-box;
    border: 1px solid #3a8fdf;
    background: #f0f0f0;
    box-shadow: 4px 4px 8px rgba(0, 0, 0, 0.25);
    display: flex;
    flex-direction: column;
  }

  .dlg-title {
    height: 25px;
    flex: none;
    background: #fff;
    display: flex;
    align-items: center;
    justify-content: space-between;
    padding: 0 9px 0 2px;
  }

  .dlg-body {
    display: flex;
    gap: 16px;
    padding: 10px 0 0 7px;
    height: 339px;
    box-sizing: content-box;
  }

  .dlg-left {
    width: 321px;
    flex: none;
    padding-top: 4px;
  }

  .group {
    margin: 0;
    padding: 0 0 0 7px;
    height: 138px;
    box-sizing: border-box;
    border: 1px solid #dcdcdc;
    position: relative;
  }

  .group legend {
    position: absolute;
    left: 6px;
    top: -6px;
    padding: 0;
    background: #f0f0f0;
    line-height: 12px;
  }

  .thumbs {
    margin-top: 7px;
    width: 305px;
    height: 123px;
    display: flex;
    gap: 4px;
    background: #c0c0c0;
  }

  .lb text {
    fill: #fff;
    font: 36px "Liberation Mono", monospace;
  }

  .cap {
    fill: #fff;
    font: 34px "Noto Sans Mono CJK SC", "Noto Sans CJK SC", monospace;
  }

  .rebar-box {
    margin-top: 8px;
    height: 188px;
    box-sizing: border-box;
    border: 1px solid #aaa;
    background: #fff;
    padding-left: 1px;
  }

  .mini {
    display: grid;
    grid-template-columns: 21px 73px 116px;
    height: 19px;
    width: 210px;
  }

  .mini span {
    box-sizing: border-box;
    border: solid #b8b8b8;
    border-width: 0 1px 1px 0;
    line-height: 18px;
  }

  .mini .rebar {
    border: 0;
  }

  .mini .m0 {
    background: #fdd78f;
  }

  .mini .m1 {
    background: #d6e8f7;
    padding-left: 2px;
  }

  .mini .m2 {
    padding-left: 2px;
  }

  .mini.head {
    height: 20px;
  }

  .mini.head .m0 {
    background: linear-gradient(#fff, #f0f0f0);
  }

  .mini.head .m1 {
    background: linear-gradient(#fbdca0, #f2bd60);
  }

  .mini.head .m2 {
    background: linear-gradient(#fff, #eee);
  }

  .preview {
    width: 311px;
    height: 338px;
    flex: none;
    outline: 1px solid #bbb;
  }

  .preview svg {
    display: block;
  }

  .dim text {
    fill: #00d000;
    font: 60px "Liberation Serif", serif;
  }

  .pcap {
    fill: #fff;
    font: 58px "Liberation Serif", "Noto Sans CJK SC", serif;
  }

  .dlg-foot {
    display: flex;
    align-items: center;
    height: 34px;
    margin-top: 5px;
    padding-left: 7px;
  }

  .fmt {
    width: 490px;
    white-space: nowrap;
  }

  .btn {
    width: 72px;
    height: 23px;
    padding: 0;
    margin-left: 15px;
    border: 1px solid #adadad;
    background: #e1e1e1;
    color: #000;
    font: inherit;
  }

  .btn.primary {
    margin-left: 0;
    border: 2px solid #0078d7;
  }

  .marks {
    position: absolute;
    left: 0;
    top: 0;
    pointer-events: none;
  }
</style>
